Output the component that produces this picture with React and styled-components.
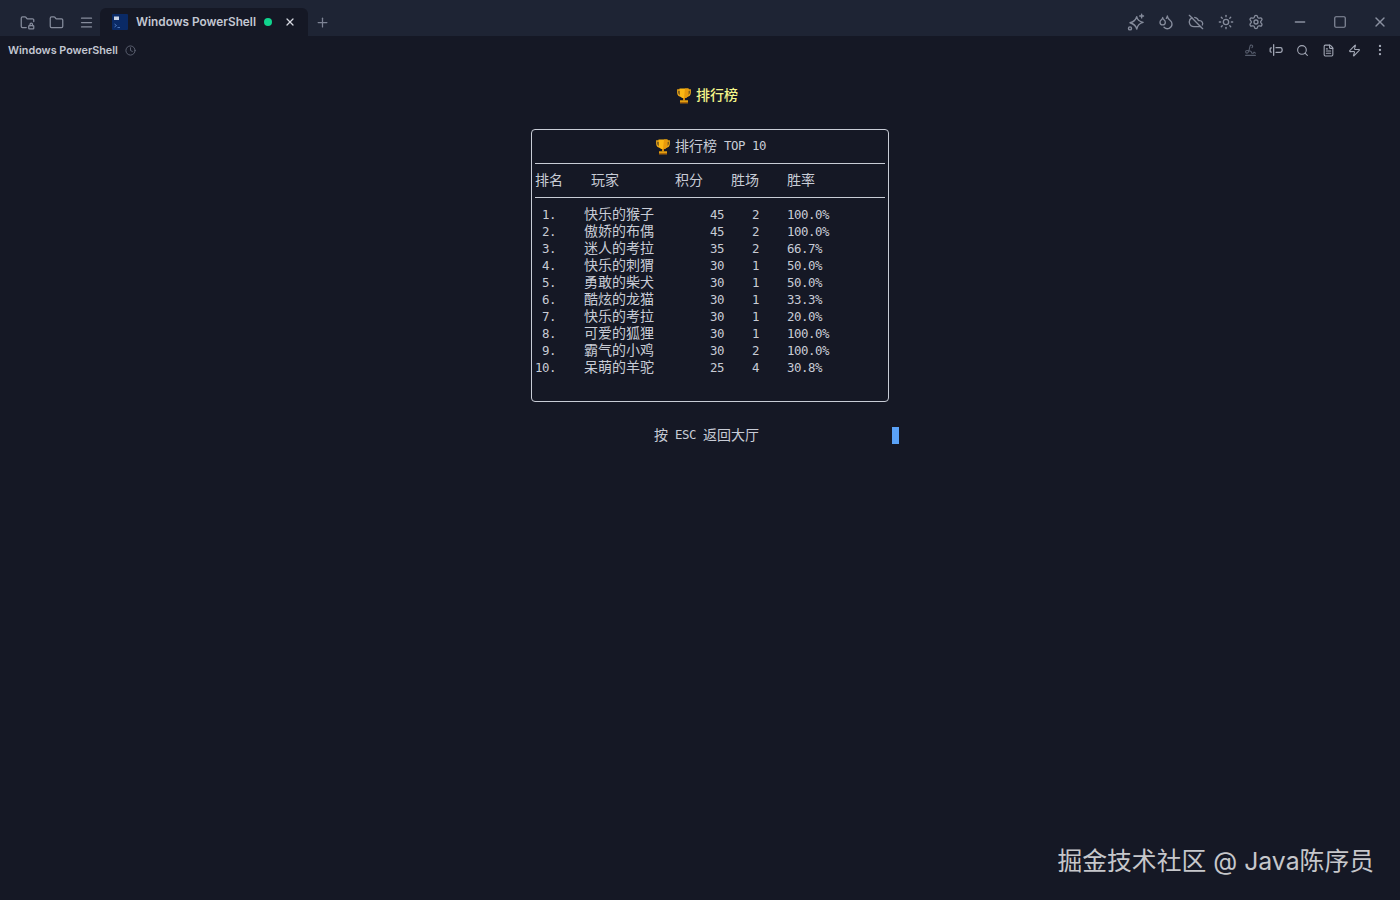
import React from 'react';
import styled, { createGlobalStyle } from 'styled-components';
import {
  FolderLock, Folder, Menu, X, Plus, Droplets, CloudOff, Sun, Settings,
  Minus, Square, Clock, Search, FileText, Zap, EllipsisVertical, Signature,
} from 'lucide-react';

const players = [
  ['1.', '快乐的猴子', 45, 2, '100.0%'],
  ['2.', '傲娇的布偶', 45, 2, '100.0%'],
  ['3.', '迷人的考拉', 35, 2, '66.7%'],
  ['4.', '快乐的刺猬', 30, 1, '50.0%'],
  ['5.', '勇敢的柴犬', 30, 1, '50.0%'],
  ['6.', '酷炫的龙猫', 30, 1, '33.3%'],
  ['7.', '快乐的考拉', 30, 1, '20.0%'],
  ['8.', '可爱的狐狸', 30, 1, '100.0%'],
  ['9.', '霸气的小鸡', 30, 2, '100.0%'],
  ['10.', '呆萌的羊驼', 25, 4, '30.8%'],
];

const Trophy = () => (
  <svg width="14" height="16" viewBox="0 0 14 16">
    <path d="M3 2H.8v2.500C.8 7 2.600 8 4.500 8M11 2h2.200v2.500C13.200 7 11.400 8 9.500 8" fill="none" stroke="#e8a317" strokeWidth="1.400" />
    <path d="M2.500 .5h9v5.500c0 2.600-1.900 4.200-4.500 4.200S2.500 8.600 2.500 6z" fill="#fdb813" />
    <path d="M8 .5h3.500v5.500c0 2.600-1.900 4.200-4.500 4.200z" fill="#e89a0c" />
    <rect x="6" y="10" width="2" height="2.500" fill="#d98c0a" />
    <rect x="3" y="12.500" width="8" height="3" fill="#a8650a" />
    <rect x="3" y="12.500" width="8" height="1.200" fill="#fdb813" />
  </svg>
);

const PowerShellIcon = () => (
  <svg width="16" height="16" viewBox="0 0 16 16">
    <rect width="16" height="16" rx="1" fill="#0a2a66" />
    <rect x="2" y="2.500" width="5" height="3.500" fill="#c9d3e6" />
    <path d="M2.500 10l2 1.500-2 1.500M5.500 13.500H8" fill="none" stroke="#5c86c9" strokeWidth="0.800" />
  </svg>
);

const SparkIcon = () => (
  <svg width="18" height="18" viewBox="0 0 24 24" fill="none" stroke="currentColor" strokeWidth="1.900" strokeLinecap="round" strokeLinejoin="round">
    <path d="M13 5Q14 11 21.500 12.500 14.500 14 13 21.500 11.500 15 4 13 11 11.500 13 5z" />
    <path d="M19.500 1.500v5M17 4h5" />
    <circle cx="4" cy="20.500" r="2" />
  </svg>
);

const PillCursorIcon = () => (
  <svg width="14" height="14" viewBox="0 0 24 24" fill="none" stroke="currentColor" strokeWidth="2.200" strokeLinecap="round">
    <path d="M8 3v18" />
    <path d="M4 8.500H3.500A1.500 1.500 0 0 0 2 10v4a1.500 1.500 0 0 0 1.500 1.500H4" />
    <path d="M12 8h7.500a3 3 0 0 1 3 3v2a3 3 0 0 1-3 3H12" />
  </svg>
);

export default function App() {
  return (
    <>
      <GlobalStyle />
      <Page>
        <TabBar>
          <IconButton><FolderLock size={15} /></IconButton>
          <IconButton><Folder size={15} /></IconButton>
          <IconButton><Menu size={15} /></IconButton>
          <Tab>
            <PowerShellIcon />
            <TabTitle>Windows PowerShell</TabTitle>
            <StatusDot />
            <TabClose><X size={12} strokeWidth={2.500} /></TabClose>
          </Tab>
          <AddButton><Plus size={15} /></AddButton>
          <BarTools>
            <IconButton><SparkIcon /></IconButton>
            <IconButton><Droplets size={16} /></IconButton>
            <IconButton><CloudOff size={16} /></IconButton>
            <IconButton><Sun size={16} /></IconButton>
            <IconButton><Settings size={16} /></IconButton>
          </BarTools>
          <WindowButton><Minus size={16} /></WindowButton>
          <WindowButton><Square size={14} /></WindowButton>
          <WindowButton><X size={16} /></WindowButton>
        </TabBar>

        <SubBar>
          <SubTitle>Windows PowerShell</SubTitle>
          <HistoryIcon><Clock size={11} /></HistoryIcon>
          <SubTools>
            <SubButton $dim><Signature size={13} /></SubButton>
            <SubButton><PillCursorIcon /></SubButton>
            <SubButton><Search size={13} /></SubButton>
            <SubButton><FileText size={13} /></SubButton>
            <SubButton><Zap size={13} /></SubButton>
            <SubButton><EllipsisVertical size={14} /></SubButton>
          </SubTools>
        </SubBar>

        <Terminal>
          <Screen>
            <PageTitle>
              <Trophy />
              <Cjk>排行榜</Cjk>
            </PageTitle>

            <Board>
              <BoardTitle>
                <Trophy />
                <Cjk>排行榜</Cjk>
                <Latin>TOP 10</Latin>
              </BoardTitle>
              <Rule />
              <HeadRow>
                <Cjk>排名</Cjk>
                <Cjk>玩家</Cjk>
                <Cjk>积分</Cjk>
                <Cjk>胜场</Cjk>
                <Cjk>胜率</Cjk>
              </HeadRow>
              <Rule />
              {players.map((p) => (
                <PlayerRow key={p[0]}>
                  <Rank>{p[0]}</Rank>
                  <Cjk>{p[1]}</Cjk>
                  <span>{p[2]}</span>
                  <span>{p[3]}</span>
                  <span>{p[4]}</span>
                </PlayerRow>
              ))}
            </Board>

            <Footer>
              <FooterText>
                <Cjk>按</Cjk>
                <Latin>ESC</Latin>
                <Cjk>返回大厅</Cjk>
              </FooterText>
              <Cursor />
            </Footer>
          </Screen>
          <Watermark>掘金技术社区 @ Java陈序员</Watermark>
        </Terminal>
      </Page>
    </>
  );
}

const GlobalStyle = createGlobalStyle`
  html, body {
    margin: 0;
    padding: 0;
    background: #151825;
  }
`;

const Page = styled.div`
  width: 1400px;
  height: 900px;
  display: flex;
  flex-direction: column;
  overflow: hidden;
  background: #151825;
  font-family: Inter, "Noto Sans", sans-serif;
`;

const TabBar = styled.div`
  height: 36px;
  flex: none;
  box-sizing: border-box;
  display: flex;
  align-items: center;
  padding: 8px 0 0 12.5px;
  background: #1e2434;
  color: #8a90a0;
`;

const IconButton = styled.div`
  width: 29.5px;
  height: 28px;
  display: flex;
  align-items: center;
  justify-content: center;
  color: #868c9c;
`;

const Tab = styled.div`
  width: 208px;
  height: 28px;
  box-sizing: border-box;
  margin-left: -1px;
  padding-left: 12px;
  display: flex;
  align-items: center;
  gap: 8px;
  background: #151825;
  border-radius: 6px 6px 0 0;
`;

const TabTitle = styled.span`
  width: 120px;
  margin-top: -1px;
  white-space: nowrap;
  font-size: 11.8px;
  font-weight: 600;
  color: #c3c7d2;
`;

const StatusDot = styled.span`
  width: 8px;
  height: 8px;
  border-radius: 50%;
  background: #10d48e;
`;

const TabClose = styled.span`
  display: flex;
  margin-left: 4px;
  color: #d5d8e0;
`;

const AddButton = styled.div`
  width: 28px;
  display: flex;
  justify-content: center;
  color: #7d8394;
`;

const BarTools = styled.div`
  margin-left: auto;
  margin-right: 9px;
  display: flex;

  & > div {
    width: 30px;
  }
`;

const WindowButton = styled.div`
  width: 40px;
  height: 28px;
  display: flex;
  align-items: center;
  justify-content: center;
  color: #8a90a0;
`;

const SubBar = styled.div`
  height: 28px;
  flex: none;
  display: flex;
  align-items: center;
  padding: 0 7px 0 8px;
`;

const SubTitle = styled.span`
  width: 110px;
  white-space: nowrap;
  font-size: 10.8px;
  font-weight: 600;
  color: #c3c7d2;
`;

const HistoryIcon = styled.span`
  display: flex;
  margin-left: 7px;
  color: #5f6575;
`;

const SubTools = styled.div`
  margin-left: auto;
  display: flex;
`;

const SubButton = styled.div`
  width: 26px;
  height: 26px;
  display: flex;
  align-items: center;
  justify-content: center;
  color: ${(p) => (p.$dim ? '#565c6c' : '#a2a7b5')};
`;

const Terminal = styled.div`
  flex: 1;
  position: relative;
  padding: 23px 0 0 531px;
  font-family: "DejaVu Sans Mono", "Noto Sans CJK SC", monospace;
  font-size: 12.4px;
  letter-spacing: -0.47px;
  line-height: 17px;
  color: #c8ccd6;
`;

const Screen = styled.div`
  width: 368px;
`;

const Cjk = styled.span`
  height: 17px;
  font-family: "Noto Sans CJK SC", sans-serif;
  font-size: 14px;
  letter-spacing: 0;
  line-height: 15px;
  white-space: nowrap;
`;

const Latin = styled.span`
  margin: -2px 0 0 2px;
  white-space: pre;
`;

const PageTitle = styled.div`
  height: 17px;
  padding-left: 146px;
  display: flex;
  align-items: center;
  gap: 5px;
  color: #f4f58a;
  font-weight: 500;
`;

const Board = styled.div`
  width: 358px;
  box-sizing: border-box;
  margin-top: 25px;
  padding: 8px 3px 25px;
  border: 1px solid #c8ccd6;
  border-radius: 4px;
`;

const BoardTitle = styled.div`
  height: 17px;
  padding-left: 121px;
  display: flex;
  align-items: center;
  gap: 5px;
`;

const Rule = styled.div`
  height: 1px;
  margin: 8px 0;
  background: #c8ccd6;
`;

const HeadRow = styled.div`
  height: 17px;
  display: grid;
  grid-template-columns: 56px 84px 56px 56px 1fr;
`;

const PlayerRow = styled.div`
  height: 17px;
  display: grid;
  grid-template-columns: 49px 126px 42px 35px 1fr;
  white-space: pre;
`;

const Rank = styled.span`
  width: 21px;
  text-align: right;
`;

const Footer = styled.div`
  height: 17px;
  margin-top: 25px;
  display: flex;
  justify-content: space-between;
`;

const FooterText = styled.div`
  margin-left: 123px;
  display: flex;
  align-items: center;
  gap: 7px;

  ${Latin} {
    margin-left: 0;
  }
`;

const Cursor = styled.span`
  width: 7px;
  height: 17px;
  background: #5aa2f8;
`;

const Watermark = styled.div`
  position: absolute;
  right: 26px;
  bottom: 22px;
  font-family: Inter, "Noto Sans CJK SC", sans-serif;
  font-size: 24.8px;
  letter-spacing: 0;
  line-height: 34px;
  color: #c6c7cb;
  white-space: nowrap;
`;
